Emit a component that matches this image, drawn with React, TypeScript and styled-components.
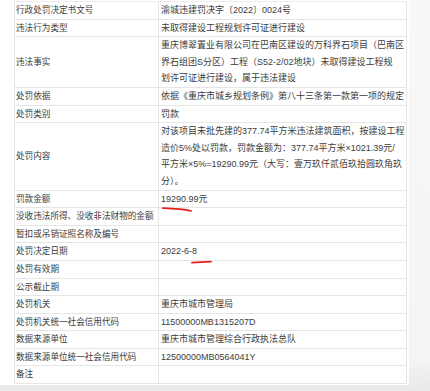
import React from 'react'
import styled, { createGlobalStyle } from 'styled-components'

const GlobalStyle = createGlobalStyle`
  html, body {
    margin: 0;
    padding: 0;
  }
  body {
    font-family: "Liberation Sans", "Noto Sans CJK SC", sans-serif;
    -webkit-font-smoothing: antialiased;
  }
`

const Page = styled.div`
  width: 430px;
  height: 391px;
  overflow: hidden;
  display: flex;
  align-items: flex-start;
  background: linear-gradient(180deg, #f8f8f8 0%, #f4f4f4 92%, #e8e8e8 100%);
`

const Sheet = styled.div`
  width: 409px;
  box-sizing: border-box;
  padding: 1px 2px 1px 14px;
  background: #fff;
`

const Table = styled.div`
  border: 1px solid #e6e6e6;
  border-bottom: none;
  border-top-color: #ececec;
`

const Row = styled.div`
  display: grid;
  grid-template-columns: 144px 1fr;
  border-bottom: 1px solid #e6e6e6;
`

const Label = styled.div`
  display: flex;
  align-items: center;
  padding: 0 1px;
  border-right: 1px solid #e6e6e6;
  font-size: 8.6px;
  line-height: 16.6px;
  color: #3c3c3c;
  white-space: nowrap;
  overflow: hidden;
`

const Value = styled.div`
  position: relative;
  display: flex;
  flex-direction: column;
  justify-content: center;
  padding: 0 2px;
  font-size: 9px;
  line-height: 16.6px;
  color: #3c3c3c;
  white-space: nowrap;
  min-height: 16.6px;
`

const Mark = styled.svg<{ $left: number; $top: number }>`
  position: absolute;
  left: ${({ $left }) => $left}px;
  top: ${({ $top }) => $top}px;
  overflow: visible;
  pointer-events: none;
`

interface Item {
  label: string
  lines?: string[]
  mark?: 'amount' | 'date'
}

const rows: Item[] = [
  { label: '行政处罚决定书文号', lines: ['渝城违建罚决字〔2022〕0024号'] },
  { label: '违法行为类型', lines: ['未取得建设工程规划许可证进行建设'] },
  {
    label: '违法事实',
    lines: [
      '重庆博翠置业有限公司在巴南区建设的万科界石项目（巴南区',
      '界石组团S分区）工程（S52-2/02地块）未取得建设工程规',
      '划许可证进行建设，属于违法建设',
    ],
  },
  { label: '处罚依据', lines: ['依据《重庆市城乡规划条例》第八十三条第一款第一项的规定'] },
  { label: '处罚类别', lines: ['罚款'] },
  {
    label: '处罚内容',
    lines: [
      '对该项目未批先建的377.74平方米违法建筑面积，按建设工程',
      '造价5%处以罚款，罚款金额为：377.74平方米×1021.39元/',
      '平方米×5%=19290.99元（大写：壹万玖仟贰佰玖拾圆玖角玖',
      '分）。',
    ],
  },
  { label: '罚款金额', lines: ['19290.99元'], mark: 'amount' },
  { label: '没收违法所得、没收非法财物的金额' },
  { label: '暂扣或吊销证照名称及编号' },
  { label: '处罚决定日期', lines: ['2022-6-8'], mark: 'date' },
  { label: '处罚有效期' },
  { label: '公示截止期' },
  { label: '处罚机关', lines: ['重庆市城市管理局'] },
  { label: '处罚机关统一社会信用代码', lines: ['11500000MB1315207D'] },
  { label: '数据来源单位', lines: ['重庆市城市管理综合行政执法总队'] },
  { label: '数据来源单位统一社会信用代码', lines: ['12500000MB0564041Y'] },
  { label: '备注' },
]

const RedLine: React.FC<{ kind: 'amount' | 'date' }> = ({ kind }) =>
  kind === 'amount' ? (
    <Mark $left={3} $top={16} width="30" height="5">
      <path d="M1 1.2 C 10 1.6, 22 1.6, 29 4" stroke="#e3201b" strokeWidth="1.8" fill="none" strokeLinecap="round" />
    </Mark>
  ) : (
    <Mark $left={32} $top={17} width="22" height="4">
      <path d="M1 2.6 C 7 2.4, 14 1.8, 20 1.6" stroke="#e3201b" strokeWidth="1.8" fill="none" strokeLinecap="round" />
    </Mark>
  )

const App: React.FC = () => {
  return (
    <Page>
      <GlobalStyle />
      <Sheet>
        <Table>
          {rows.map((row) => (
            <Row key={row.label}>
              <Label>{row.label}</Label>
              <Value>
                {(row.lines || []).map((line, i) => (
                  <span key={i}>{line}</span>
                ))}
                {row.mark && <RedLine kind={row.mark} />}
              </Value>
            </Row>
          ))}
        </Table>
      </Sheet>
    </Page>
  )
}

export default App
